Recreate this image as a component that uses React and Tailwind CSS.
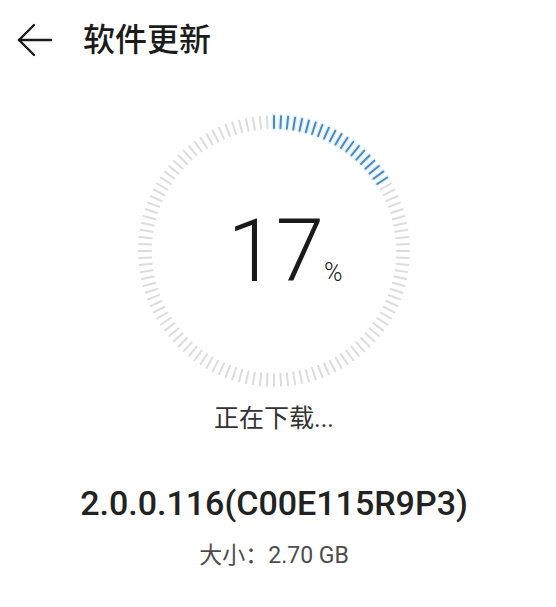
const TICKS = 120
const DONE = 20

function ProgressDial() {
  const cx = 140
  const cy = 140
  const lines = []
  for (let i = 0; i < TICKS; i++) {
    const a = (i * 360) / TICKS * (Math.PI / 180)
    const s = Math.sin(a)
    const c = Math.cos(a)
    lines.push({
      key: i,
      x1: cx + 123 * s,
      y1: cy - 123 * c,
      x2: cx + 135 * s,
      y2: cy - 135 * c,
      done: i < DONE,
    })
  }
  return (
    <svg width="280" height="280" viewBox="0 0 280 280">
      {lines
        .filter((l) => l.done)
        .map((l) => (
          <line key={'g' + l.key} x1={l.x1} y1={l.y1} x2={l.x2} y2={l.y2} stroke="#e4f1f9" strokeWidth="5" strokeLinecap="round" />
        ))}
      {lines.map((l) => (
        <line
          key={l.key}
          x1={l.x1}
          y1={l.y1}
          x2={l.x2}
          y2={l.y2}
          stroke={l.done ? '#4a8dbd' : '#dcdcdc'}
          strokeWidth="2"
          strokeLinecap="round"
        />
      ))}
    </svg>
  )
}

export default function App() {
  return (
    <div className="min-h-[607px] w-[556px] bg-white font-['Roboto','Noto_Sans_CJK_SC',sans-serif]">
      <header className="flex h-[80px] items-center pl-[17px]">
        <svg width="36" height="34" viewBox="0 0 36 34" fill="none" stroke="#1a1a1a" strokeWidth="2.4" strokeLinecap="round" strokeLinejoin="round">
          <path d="M34 17H2" />
          <path d="M17 2L2 17l15 15" />
        </svg>
        <h1 className="ml-[30px] text-[32px] font-medium leading-none text-[#1b1b1b]">软件更新</h1>
      </header>

      <main className="flex flex-col items-center pr-2">
        <div className="relative mt-[31px] h-[280px] w-[280px]">
          <ProgressDial />
          <div className="absolute inset-0 flex items-center justify-center">
            <div className="flex items-baseline pl-[22px] text-[#1a1a1a]">
              <span className="text-[87px] font-light leading-none">17</span>
              <span className="text-[25px] font-light leading-none">%</span>
            </div>
          </div>
        </div>

        <p className="mt-[12px] text-[25px] leading-[32px] text-[#333]">正在下载...</p>

        <p className="mt-[48px] text-[34px] font-medium leading-[40px] text-[#222]">2.0.0.116(C00E115R9P3)</p>

        <p className="mt-[19px] text-[23px] leading-[28px] text-[#4d4d4d]">大小：2.70 GB</p>
      </main>
    </div>
  )
}
